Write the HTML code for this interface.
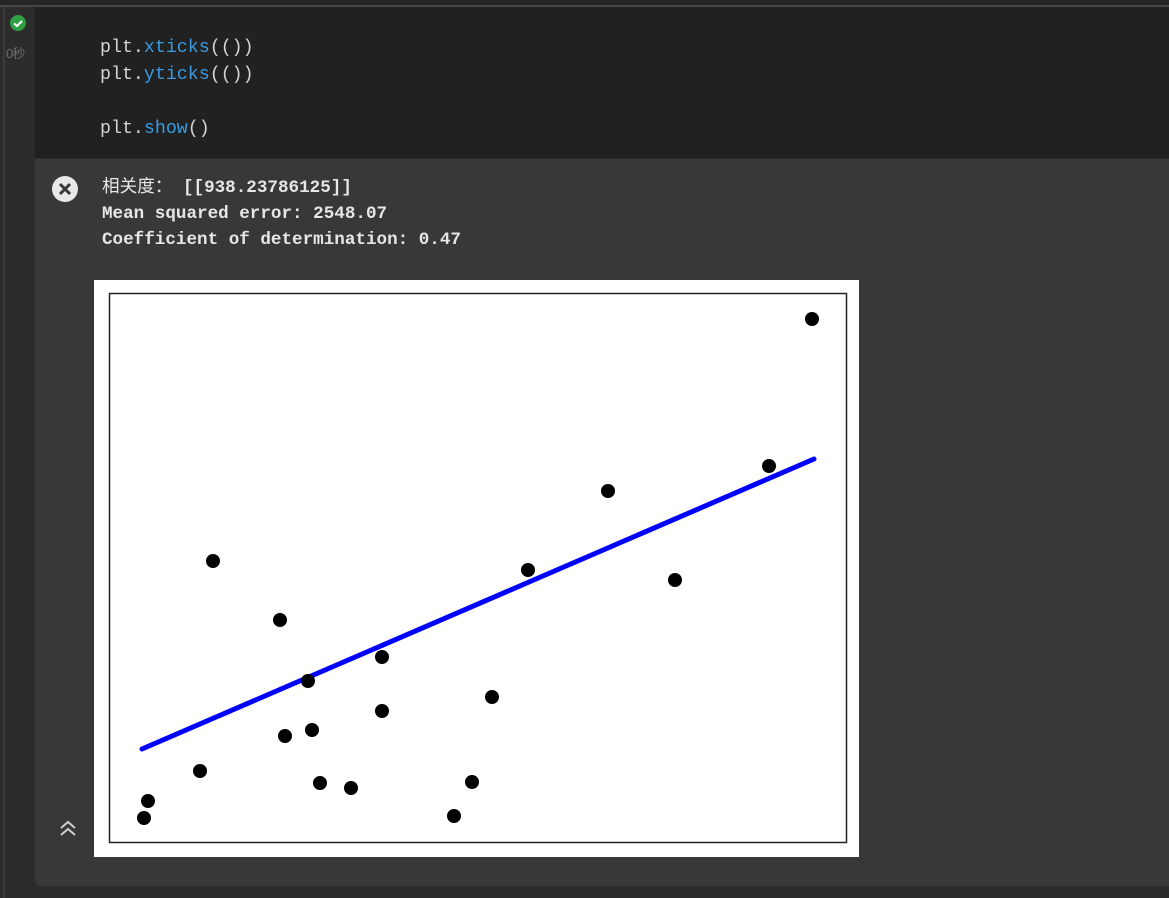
<!DOCTYPE html>
<html><head><meta charset="utf-8"><style>
html,body{margin:0;padding:0;width:1169px;height:898px;overflow:hidden;background:#2c2c2c;}
.top{position:absolute;left:0;top:0;width:1169px;height:5px;background:#252525;border-bottom:2px solid #464646;}
.gutter{position:absolute;left:0;top:7px;width:35px;height:891px;background:#2c2c2c;}
.gl{position:absolute;left:3px;top:7px;width:2px;height:891px;background:#3a3a3a;}
.code{position:absolute;left:35px;top:7px;width:1134px;height:151px;background:#212121;}
.code pre{margin:0;position:absolute;left:65px;top:28px;font:18.3px/27px "Liberation Mono",monospace;color:#d4d4d4;}
.b{color:#3b9ae0;}
.out{position:absolute;left:35px;top:159px;width:1134px;height:727px;background:#383838;border-bottom-left-radius:6px;}
.txt{position:absolute;left:67px;top:14px;font:bold 17.6px/26px "Liberation Mono","Noto Sans CJK SC",monospace;color:#e6e6e6;white-space:pre;}
.plot{position:absolute;left:59px;top:121px;}
</style></head><body>
<div class="top"></div>
<div class="gutter"></div><div class="gl"></div>
<svg style="position:absolute;left:9px;top:14px" width="18" height="18"><circle cx="9" cy="9" r="8" fill="#2f9e44"/><path d="M5 9.5l3 2.5 5-5" stroke="#fff" stroke-width="2" fill="none"/></svg>
<div style="position:absolute;left:6px;top:43px;font:13px 'Liberation Sans','Noto Sans CJK SC',sans-serif;color:#6b6b6b;letter-spacing:-1px">0秒</div>
<div class="code"><pre>plt.<span class="b">xticks</span>(())
plt.<span class="b">yticks</span>(())

plt.<span class="b">show</span>()</pre></div>
<div class="out">
<svg style="position:absolute;left:16px;top:16px" width="28" height="28"><circle cx="14" cy="14" r="13" fill="#e8e8e8"/><path d="M9 9l10 10M19 9l-10 10" stroke="#383838" stroke-width="3"/></svg>
<div class="txt"><span style="font-weight:normal;font-family:'Noto Sans CJK SC',sans-serif">相关度：</span> [[938.23786125]]
Mean squared error: 2548.07
Coefficient of determination: 0.47</div>
<svg style="position:absolute;left:23px;top:659px" width="20" height="20"><path d="M3 10l7-6 7 6M3 17l7-6 7 6" stroke="#cfcfcf" stroke-width="2" fill="none"/></svg>
<svg class="plot" width="765" height="577" viewBox="94 280 765 577">
<rect x="94" y="280" width="765" height="577" fill="#fff"/>
<rect x="109.5" y="293.5" width="737" height="549" fill="none" stroke="#222" stroke-width="1.5"/>
<line x1="142" y1="749" x2="814" y2="459" stroke="#0000ff" stroke-width="5" stroke-linecap="round"/>
<g fill="#000">
<circle cx="812" cy="319" r="7"/><circle cx="769" cy="466" r="7"/><circle cx="608" cy="491" r="7"/>
<circle cx="213" cy="561" r="7"/><circle cx="528" cy="570" r="7"/><circle cx="675" cy="580" r="7"/>
<circle cx="280" cy="620" r="7"/><circle cx="382" cy="657" r="7"/><circle cx="308" cy="681" r="7"/>
<circle cx="492" cy="697" r="7"/><circle cx="382" cy="711" r="7"/><circle cx="312" cy="730" r="7"/>
<circle cx="285" cy="736" r="7"/><circle cx="200" cy="771" r="7"/><circle cx="472" cy="782" r="7"/>
<circle cx="320" cy="783" r="7"/><circle cx="351" cy="788" r="7"/><circle cx="148" cy="801" r="7"/>
<circle cx="454" cy="816" r="7"/><circle cx="144" cy="818" r="7"/>
</g>
</svg>
</div>
</body></html>
